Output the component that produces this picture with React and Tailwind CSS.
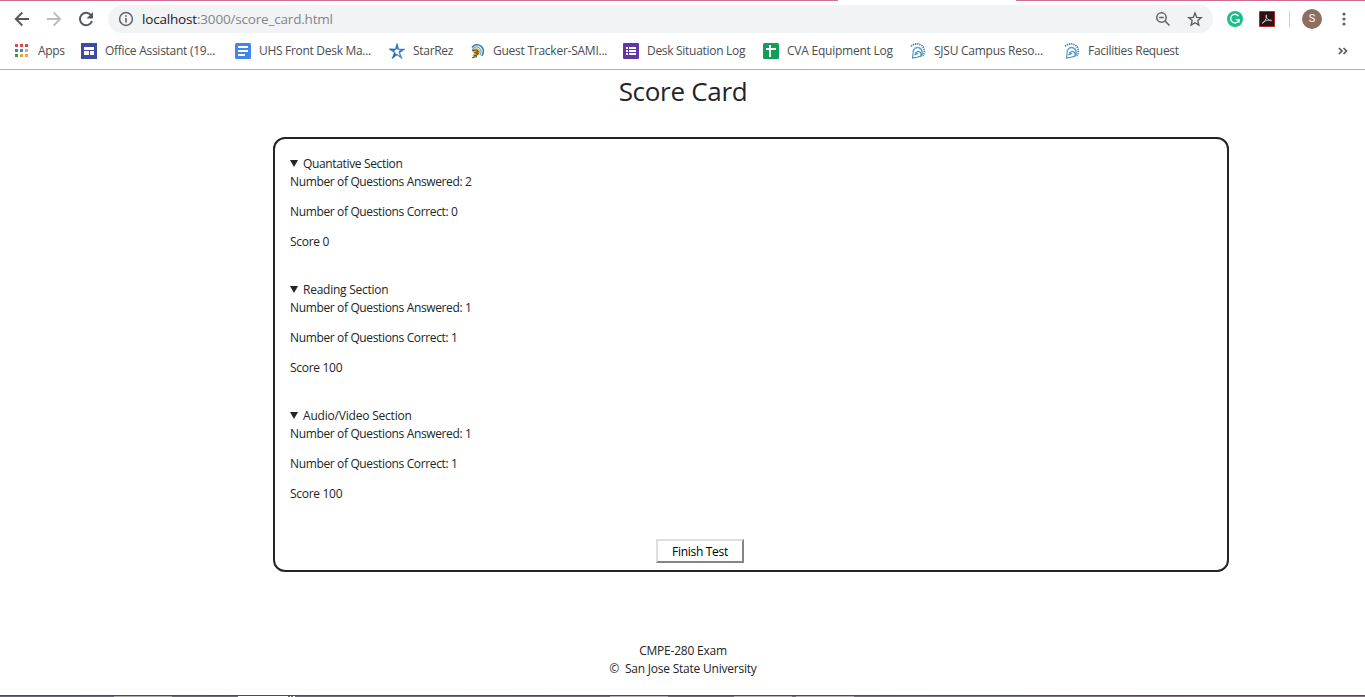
import React from 'react';

const SpartanIcon = ({ gold }) => (
  <svg viewBox="0 0 16 16" className="size-4 shrink-0" fill="none">
    {gold ? (
      <>
        <path d="M3 4.500C5 1.500 9 .800 12 3.200c2.700 2.200 2.800 6.200 1 9.800" stroke="#3d79b0" strokeWidth="1.500" />
        <path d="M3.200 7C4.500 4 8 3 10.300 5c2 1.800 2 4.800.7 7.300" stroke="#78a9d0" strokeWidth="1.300" />
        <path d="M3 8C4 5 8 4.500 10 6.500s1 5-2 6.500l-4 1.500-.5-2L5 10.500z" fill="#e6b422" />
        <path d="M3.200 7.500 7.500 7l2 1.500-4 1M6.500 10.500l3-.5-1.500 2-3 .8M3 14.800l5-1.300" stroke="#28516f" strokeWidth="1" />
      </>
    ) : (
      <>
        <path d="M1 3.200C5-.2 11.500.2 13.700 5c1 2.500.7 5.500-.7 8" stroke="#3b84b5" strokeWidth="1.800" strokeDasharray="1.300 .9" />
        <path d="M3 9.500C3 6 6 4 8.800 4.700c3.500.9 4.200 4.800 2.400 8.300" stroke="#5aa2d6" strokeWidth="1.500" />
        <path d="M3.200 9.500 2.500 15l4.500-.8 4.200-1.200-.5-3.500L8 8.300 5.500 10l1.800.8-3 1.200" stroke="#3f8dc2" strokeWidth="1.100" />
      </>
    )}
  </svg>
);

const SitesIcon = () => (
  <svg viewBox="0 0 16 16" className="size-4 shrink-0">
    <path fill="#3f4ba0" d="M0 0h16v16H0z" />
    <path fill="#fff" d="M3 4h10v3H3zM3 8h5v4H3zM9 8h4v4H9z" />
  </svg>
);

const DocsIcon = () => (
  <svg viewBox="0 0 16 16" className="size-4 shrink-0">
    <rect width="16" height="16" rx="1.500" fill="#4384f0" />
    <path fill="#fff" d="M3 3h10v2H3zM3 7h10v2H3zM3 11h7v2H3z" />
  </svg>
);

const StarIcon = () => (
  <svg viewBox="0 0 16 16" className="size-4 shrink-0">
    <path fill="#fff" stroke="#3f8bcc" strokeWidth="1.300" d="m8 1.500 1.500 4.800 5.300.1-4.500 3 2 5.300L8 11.500l-4.300 3.200 2-5.300-4.500-3 5.300-.1z" />
    <path fill="#2f68ac" d="M8 0 9 6.300 7 6zM0 5.500l6 .4-.4 2.600zM8 11 3 16l2.300-6zM15.800 5.700l-5.500 3.800-.3-1.800z" />
  </svg>
);

const FormsIcon = () => (
  <svg viewBox="0 0 16 16" className="size-4 shrink-0">
    <rect width="16" height="16" rx="1" fill="#6237a5" />
    <path fill="#fff" d="M3 4h2v2H3zM6 4h7v2H6zM3 7h2v2H3zM6 7h7v2H6zM3 10h2v2H3zM6 10h7v2H6z" />
  </svg>
);

const SheetsIcon = () => (
  <svg viewBox="0 0 16 16" className="size-4 shrink-0">
    <rect width="16" height="16" rx="1.500" fill="#149c58" />
    <path fill="#fff" d="M6 2h2v3h5v2H8v7H6V7H3V5h3z" />
  </svg>
);

const AppsIcon = () => (
  <svg viewBox="0 0 16 16" className="size-4 shrink-0">
    <path fill="#d54b4b" d="M1 1h3v3H1zM6 1h3v3H6zM11 1h3v3h-3z" />
    <path fill="#359a60" d="M1 6h3v3H1zM1 11h3v3H1z" />
    <path fill="#3e83d6" d="M6 6h3v3H6z" />
    <path fill="#eda93b" d="M11 6h3v3h-3zM6 11h3v3H6zM11 11h3v3h-3z" />
  </svg>
);

const bookmarks = [
  { label: 'Apps', icon: <AppsIcon />, box: 'w-[67px]', track: 'tracking-[-0.3px]' },
  { label: 'Office Assistant (19...', icon: <SitesIcon />, box: 'w-[154px]', track: 'tracking-[-0.27px]' },
  { label: 'UHS Front Desk Ma...', icon: <DocsIcon />, box: 'w-[154px]', track: 'tracking-[-0.3px]' },
  { label: 'StarRez', icon: <StarIcon />, box: 'w-[80px]', track: 'tracking-[-0.3px]' },
  { label: 'Guest Tracker-SAMI...', icon: <SpartanIcon gold />, box: 'w-[154px]', track: 'tracking-[-0.25px]' },
  { label: 'Desk Situation Log', icon: <FormsIcon />, box: 'w-[140px]', track: 'tracking-[-0.3px]' },
  { label: 'CVA Equipment Log', icon: <SheetsIcon />, box: 'w-[147px]', track: 'tracking-[-0.23px]' },
  { label: 'SJSU Campus Reso...', icon: <SpartanIcon />, box: 'w-[154px]', track: 'tracking-[-0.25px]' },
  { label: 'Facilities Request', icon: <SpartanIcon />, box: 'w-[150px]', track: 'tracking-[-0.3px]' },
];

const sections = [
  { name: 'Quantative Section', answered: 2, correct: 0, score: 0, track: 'tracking-[-0.35px]' },
  { name: 'Reading Section', answered: 1, correct: 1, score: 100, track: 'tracking-[-0.25px]' },
  { name: 'Audio/Video Section', answered: 1, correct: 1, score: 100, track: 'tracking-[-0.2px]' },
];

function Toolbar() {
  return (
    <div className="flex h-9 items-center text-[#5f6368]">
      <svg viewBox="0 0 16 16" className="ml-[14px] size-4 shrink-0" fill="none" stroke="#55585c" strokeWidth="1.900"><path d="M15 8H2M8.300 1.500 1.800 8l6.500 6.500" /></svg>
      <svg viewBox="0 0 16 16" className="ml-4 size-4 shrink-0" fill="none" stroke="#b9bbbd" strokeWidth="1.800"><path d="M1 8h13M7.700 1.500 14.200 8l-6.500 6.500" /></svg>
      <svg viewBox="0 0 16 16" className="ml-4 size-4 shrink-0" fill="none" stroke="#55585c" strokeWidth="2"><path d="M13.200 4.500A6.200 6.200 0 1 0 14 10" /><path d="M15 1v6.500H8.500z" fill="#55585c" stroke="none" /></svg>
      <div className="ml-[14px] flex h-7 w-[1105px] items-center rounded-full bg-[#f1f3f4]">
        <svg viewBox="0 0 16 16" className="ml-[10px] size-4 shrink-0" fill="none" stroke="#5f6368" strokeWidth="1.500"><circle cx="8" cy="8" r="6.400" /><path d="M8 7v4.500M8 4.200v1.600" strokeWidth="1.600" /></svg>
        <div className="ml-2 text-[13.500px] leading-5 whitespace-nowrap tracking-[-0.18px] text-[#80868b]"><span className="text-[#202124]">localhost</span>:3000/score_card.html</div>
        <svg viewBox="0 0 16 16" className="ml-auto size-4 shrink-0" fill="none" stroke="#5f6368" strokeWidth="1.500"><circle cx="6.500" cy="6.500" r="4.700" /><path d="M4.200 6.500h4.600M10 10l4.500 4.500" /></svg>
        <svg viewBox="0 0 16 16" className="mr-[10px] ml-4 size-4 shrink-0" fill="none" stroke="#55585c" strokeWidth="1.300"><path d="m8 2 1.700 4.300 4.600.3-3.500 3 1.100 4.500L8 11.700l-3.900 2.400 1.100-4.500-3.500-3 4.600-.3z" /></svg>
      </div>
      <svg viewBox="0 0 16 16" className="ml-[14px] size-4 shrink-0"><circle cx="8" cy="8" r="8" fill="#17bf8d" /><path d="M11.500 5.200A4.300 4.300 0 1 0 12 9M8.700 8.600h3.400v3" fill="none" stroke="#fff" strokeWidth="1.400" /></svg>
      <svg viewBox="0 0 16 16" className="ml-4 size-4 shrink-0"><path d="M.5.500h15v15H.5z" fill="#291516" stroke="#b5282e" /><path d="M3.500 12.300c2-.8 4.200-4.900 4.100-7.800 0-1.200-1-.6-.7.600.6 2.500 2.900 4.600 5 4.800 1.100 0 .9-.8-.4-.9-2.500-.1-5.900.9-7.600 2.300-.7.600-.8 1.200-.4 1z" fill="none" stroke="#ddd" strokeWidth=".8" /></svg>
      <div className="ml-[14px] h-4 w-px bg-[#cfd1d4]" />
      <div className="ml-3 flex size-5 items-center justify-center rounded-full bg-[#8d6e63] font-['Roboto',sans-serif] text-[11px] text-white">S</div>
      <svg viewBox="0 0 16 16" className="ml-[14px] size-4 shrink-0" fill="#5f6368"><circle cx="8" cy="3" r="1.600" /><circle cx="8" cy="8" r="1.600" /><circle cx="8" cy="13" r="1.600" /></svg>
    </div>
  );
}

function ScoreSection({ name, answered, correct, score, track }) {
  return (
    <section className="h-[126px]">
      <div className="flex items-center">
        <svg viewBox="0 0 8 7" className="mr-[5px] mb-px h-[7px] w-2"><path d="M0 0h8L4 7z" fill="#212529" /></svg>
        <span className={track}>{name}</span>
      </div>
      <p className="mb-3 tracking-[-0.36px]">Number of Questions Answered: {answered}</p>
      <p className="mb-3 tracking-[-0.36px]">Number of Questions Correct: {correct}</p>
      <p className="tracking-[-0.3px]">Score {score}</p>
    </section>
  );
}

export default function App() {
  return (
    <div className="flex h-[697px] w-[1365px] flex-col overflow-hidden bg-white font-['Open_Sans',sans-serif] text-xs leading-[18px] text-[#212529]">
      <div className="flex h-px shrink-0 bg-[#cf6e93]"><div className="ml-[838px] w-[178px] bg-white" /></div>
      <header className="h-[69px] shrink-0 border-b border-[#b3b3b3]">
        <Toolbar />
        <nav className="flex h-7 items-center pl-[14px] text-[#4a4d51]">
          {bookmarks.map((b) => (
            <div key={b.label} className={`flex shrink-0 items-center gap-2 whitespace-nowrap ${b.box} ${b.track}`}>{b.icon}<span>{b.label}</span></div>
          ))}
          <svg viewBox="0 0 10 8" className="mr-[17px] ml-auto h-2 w-[10px]" fill="none" stroke="#55585c" strokeWidth="1.700"><path d="m1 1 3 3-3 3M5.500 1l3 3-3 3" /></svg>
        </nav>
      </header>
      <main className="flex flex-col">
        <h1 className="mt-[3px] h-16 pl-px text-center text-[26px] leading-9 tracking-[-0.3px]">Score Card</h1>
        <div className="ml-[273px] h-[435px] w-[956px] rounded-[12px] border-2 border-[#212529] px-[15px] pt-4 tracking-[-0.25px]">
          {sections.map((s) => <ScoreSection key={s.name} {...s} />)}
          <button className="ml-[366px] mt-[6px] block h-6 w-[88px] border-2 border-t-[#dedede] border-r-[#858585] border-b-[#858585] border-l-[#dedede] bg-white pt-px leading-[19px] tracking-[-0.3px] text-black"><span className="block pt-px leading-[18px]">Finish Test</span></button>
        </div>
      </main>
      <footer className="mt-[70px] pl-px text-center tracking-[-0.22px]">
        <p>CMPE-280 Exam</p>
        <p>©&nbsp; San Jose State University</p>
      </footer>
      <div className="mt-auto flex h-[2px] border-t border-[#514b59] bg-gradient-to-r from-[#686879] to-[#88717f]">
        <div className="ml-[114px] w-[58px] bg-[#aaa]" />
        <div className="ml-[66px] w-[50px] bg-white" />
        <div className="ml-[2px] w-px bg-white" />
        <div className="ml-[2px] w-[2px] bg-white" />
        <div className="ml-[315px] w-[58px] bg-[#b9aeb5]" />
        <div className="ml-[66px] w-[58px] bg-[#b9aeb5]" />
        <div className="ml-1 w-[58px] bg-[#b9aeb5]" />
      </div>
    </div>
  );
}
